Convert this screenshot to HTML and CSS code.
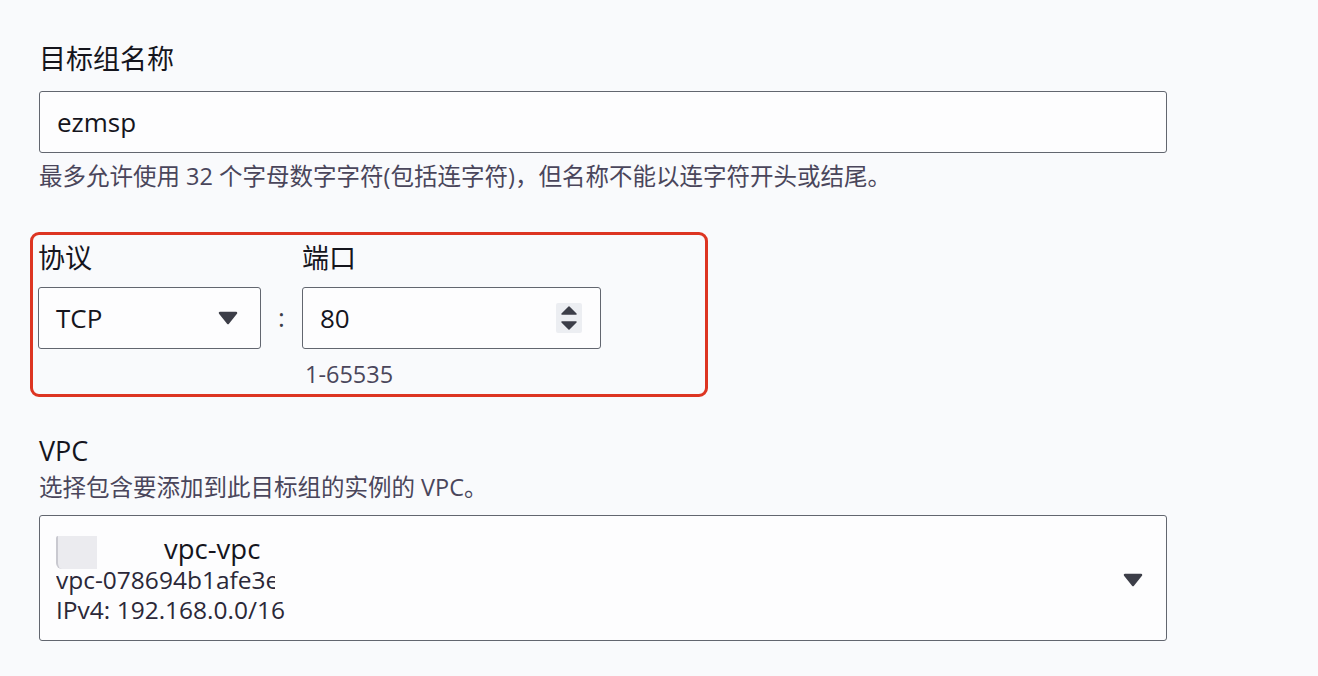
FILE: index.html
```html
<!DOCTYPE html>
<html lang="zh-CN">
<head>
<meta charset="utf-8">
<title>目标组</title>
<link rel="stylesheet" href="styles.css">
</head>
<body>
<main class="form">
  <section class="field">
    <div class="label">目标组名称</div>
    <div class="input">ezmsp</div>
    <div class="help">最多允许使用 32 个字母数字字符(包括连字符)，但名称不能以连字符开头或结尾。</div>
  </section>

  <section class="highlight">
    <div class="proto-grid">
      <div class="label">协议</div>
      <div></div>
      <div class="label">端口</div>

      <div class="input select">
        <span>TCP</span>
        <svg class="caret" width="20" height="14" viewBox="0 0 20 14"><polygon points="2,2 18,2 10,12" fill="#3c3e48" stroke="#3c3e48" stroke-width="2.5" stroke-linejoin="round"/></svg>
      </div>
      <div class="colon">:</div>
      <div class="input number">
        <span>80</span>
        <span class="spinner">
          <svg width="26" height="30" viewBox="0 0 26 30"><polygon points="13,4 20,11 6,11" fill="#3c3e48" stroke="#3c3e48" stroke-width="1.5" stroke-linejoin="round"/><polygon points="6,19 20,19 13,26" fill="#3c3e48" stroke="#3c3e48" stroke-width="1.5" stroke-linejoin="round"/></svg>
        </span>
      </div>

      <div></div>
      <div></div>
      <div class="hint">1-65535</div>
    </div>
  </section>

  <section class="field vpc-field">
    <div class="label">VPC</div>
    <div class="help tight">选择包含要添加到此目标组的实例的 VPC。</div>
    <div class="input vpc-select">
      <div class="vpc-info">
        <div class="vpc-row">
          <span class="thumb"></span>
          <span class="vpc-name">vpc-vpc</span>
        </div>
        <div class="vpc-line clip">vpc-078694b1afe3e</div>
        <div class="vpc-line">IPv4: 192.168.0.0/16</div>
      </div>
      <svg class="caret" width="20" height="14" viewBox="0 0 20 14"><polygon points="2,2 18,2 10,12" fill="#3c3e48" stroke="#3c3e48" stroke-width="2.5" stroke-linejoin="round"/></svg>
    </div>
  </section>
</main>
</body>
</html>
```

FILE: styles.css
```css
* { box-sizing: border-box; }

html, body {
  margin: 0;
  padding: 0;
  background: #f9fafc;
}

body {
  font-family: "Open Sans", "Noto Sans CJK SC", sans-serif;
  color: #1a1a26;
}

.form {
  padding: 41px 0 0 39px;
  width: 1167px;
}

.label {
  font-size: 27px;
  line-height: 36px;
  color: #15151d;
}

.input {
  height: 62px;
  border: 1.5px solid #62666f;
  border-radius: 3px;
  background: #fdfdfe;
  font-size: 26px;
  display: flex;
  align-items: center;
  padding-left: 17px;
  color: #15151d;
}

.field > .input {
  margin-top: 14px;
}

.help {
  font-size: 23.5px;
  line-height: 32px;
  color: #4a465b;
  margin-top: 7px;
}

.help.tight {
  margin-top: 2px;
}

.highlight {
  margin: 40px 0 0 -9px;
  width: 678px;
  border: 3px solid #dd3522;
  border-radius: 9px;
  padding: 5px 0 4px 5px;
}

.proto-grid {
  display: grid;
  grid-template-columns: 223px 41px 299px;
  grid-template-rows: 36px 62px 30px;
  row-gap: 11px;
}

.proto-grid .hint {
  margin-top: -1px;
}

.select {
  justify-content: space-between;
  padding-right: 22px;
}

.colon {
  font-size: 26px;
  color: #3c3e48;
  display: flex;
  align-items: center;
  justify-content: center;
  padding-bottom: 2px;
}

.number {
  justify-content: space-between;
  padding-right: 18px;
}

.spinner {
  display: flex;
  background: #eceef2;
  border-radius: 2px;
}

.spinner svg { display: block; }

.hint {
  font-size: 23.5px;
  line-height: 30px;
  color: #4a465b;
  padding-left: 3px;
}

.vpc-field {
  margin-top: 36px;
}

.vpc-field .label {
  line-height: 36px;
}

.vpc-field > .vpc-select {
  margin-top: 12px;
  height: 126px;
  align-items: flex-start;
  justify-content: space-between;
  padding: 20px 23px 16px 16px;
}

.vpc-select .caret {
  align-self: center;
}

.vpc-info {
  display: flex;
  flex-direction: column;
}

.vpc-row {
  display: flex;
  align-items: flex-start;
  height: 29px;
}

.thumb {
  width: 41px;
  height: 33px;
  background: #ebebef;
  border-left: 2px solid #c9c9d0;
  border-radius: 2px 0 0 6px;
  margin-right: 67px;
}

.vpc-name {
  font-size: 27.5px;
  line-height: 26px;
  color: #15151d;
}

.vpc-line {
  font-size: 24.5px;
  line-height: 30px;
  color: #2b2838;
}

.vpc-line.clip {
  width: 219px;
  overflow: hidden;
  white-space: nowrap;
}
```
